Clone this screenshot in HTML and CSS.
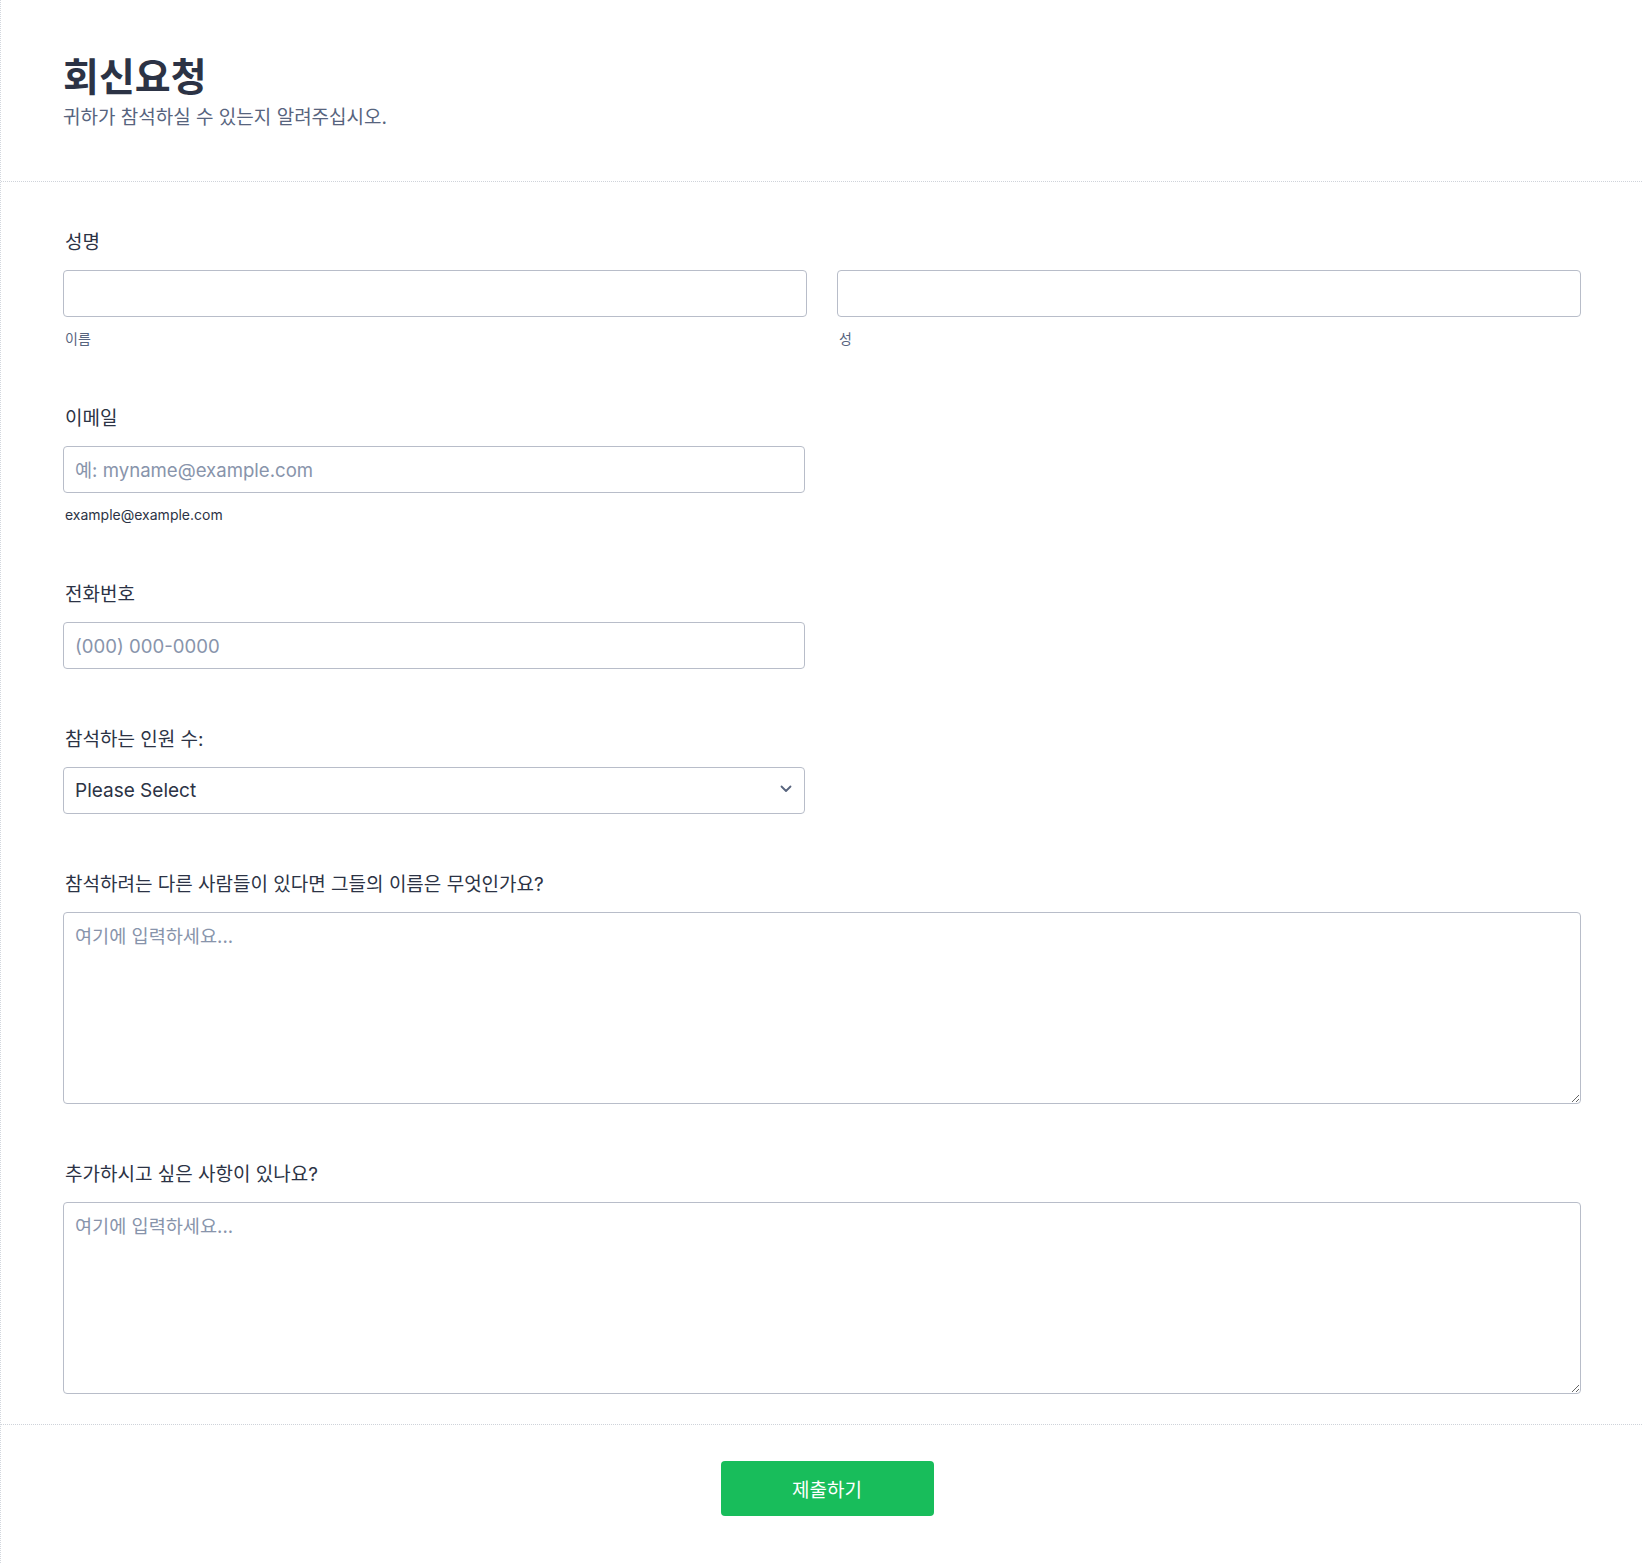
FILE: index.html
```html
<!DOCTYPE html>
<html lang="ko">
  <head>
    <meta charset="UTF-8" />
    <meta name="viewport" content="width=device-width, initial-scale=1.0" />
    <title>회신요청</title>
    <link rel="stylesheet" href="styles.css">
  </head>
  <body>
    <form class="form" action="">
      <header class="form-header">
        <h1>회신요청</h1>
        <p>귀하가 참석하실 수 있는지 알려주십시오.</p>
      </header>

      <section class="form-body">
        <div class="field">
          <label>성명</label>
          <div class="name-row">
            <div>
              <input type="text" name="first" />
              <small>이름</small>
            </div>
            <div>
              <input type="text" name="last" />
              <small>성</small>
            </div>
          </div>
        </div>

        <div class="field">
          <label>이메일</label>
          <div class="half">
            <input type="email" name="email" placeholder="예: myname@example.com" />
            <small class="dark">example@example.com</small>
          </div>
        </div>

        <div class="field">
          <label>전화번호</label>
          <div class="half">
            <input type="tel" name="phone" placeholder="(000) 000-0000" />
          </div>
        </div>

        <div class="field">
          <label>참석하는 인원 수:</label>
          <div class="half select-wrap">
            <select name="count">
              <option>Please Select</option>
              <option>1</option>
              <option>2</option>
              <option>3</option>
            </select>
            <svg class="chevron" width="12" height="8" viewBox="0 0 12 8">
              <path d="M1.5 1.5 6 6l4.5-4.5" fill="none" stroke="#57647e" stroke-width="1.8" stroke-linecap="round" stroke-linejoin="round" />
            </svg>
          </div>
        </div>

        <div class="field">
          <label>참석하려는 다른 사람들이 있다면 그들의 이름은 무엇인가요?</label>
          <textarea name="others" placeholder="여기에 입력하세요..."></textarea>
        </div>

        <div class="field last">
          <label>추가하시고 싶은 사항이 있나요?</label>
          <textarea name="extra" placeholder="여기에 입력하세요..."></textarea>
        </div>
      </section>

      <footer class="form-footer">
        <button type="submit">제출하기</button>
      </footer>
    </form>
  </body>
</html>
```

FILE: styles.css
```css
* {
  box-sizing: border-box;
}
body {
  margin: 0;
  background: #fff;
  color: #2c3345;
  font-family: Inter, "Noto Sans CJK KR", sans-serif;
}
.form {
  min-height: 100vh;
  border-left: 1px dotted #d3d7de;
}
.form-header {
  padding: 53px 62px 0 62px;
  height: 182px;
  border-bottom: 1px dotted #cfd3da;
  h1 {
    margin: 0;
    font-size: 39px;
    line-height: 48px;
    font-weight: 700;
    color: #2c3345;
  }
  p {
    margin: 4px 0 0;
    font-size: 19px;
    line-height: 26px;
    color: #57647e;
  }
}
.form-body {
  padding: 47px 61px 30px 62px;
  border-bottom: 1px dotted #cfd3da;
}
.field {
  margin-bottom: 57px;
  &.last {
    margin-bottom: 0;
  }
  label {
    display: block;
    font-size: 19px;
    line-height: 24px;
    padding-top: 2px;
    margin: 0 0 15px 2px;
    color: #2c3345;
  }
  small {
    display: block;
    margin: 13px 0 0 2px;
    font-size: 14px;
    line-height: 18px;
    color: #57647e;
    &.dark {
      color: #2c3345;
    }
  }
}
.name-row {
  display: grid;
  grid-template-columns: 1fr 1fr;
  gap: 30px;
}
.half {
  width: calc((100% - 30px) / 2 - 2px);
}
input,
select,
textarea {
  display: block;
  width: 100%;
  margin: 0;
  border: 1px solid #b8bdc9;
  border-radius: 4px;
  background: #fff;
  color: #2c3345;
  font-family: Inter, "Noto Sans CJK KR", sans-serif;
  font-size: 18.6px;
  outline: none;
}
input,
select {
  height: 47px;
  padding: 0 11px;
}
select {
  font-size: 19px;
}
textarea {
  height: 192px;
  padding: 10px 11px;
  line-height: 26px;
  resize: vertical;
}
::placeholder {
  color: #8894ab;
  opacity: 1;
}
.select-wrap {
  position: relative;
  select {
    appearance: none;
    padding-right: 36px;
  }
  .chevron {
    position: absolute;
    right: 13px;
    top: 18px;
    pointer-events: none;
  }
}
.form-footer {
  display: flex;
  justify-content: center;
  padding: 36px 0 47px 11px;
  button {
    width: 213px;
    height: 55px;
    border: 0;
    border-radius: 4px;
    background: #18bd5b;
    color: #fff;
    font-family: Inter, "Noto Sans CJK KR", sans-serif;
    font-size: 19px;
    cursor: pointer;
    &:hover {
      background: #16aa52;
    }
  }
}
```
